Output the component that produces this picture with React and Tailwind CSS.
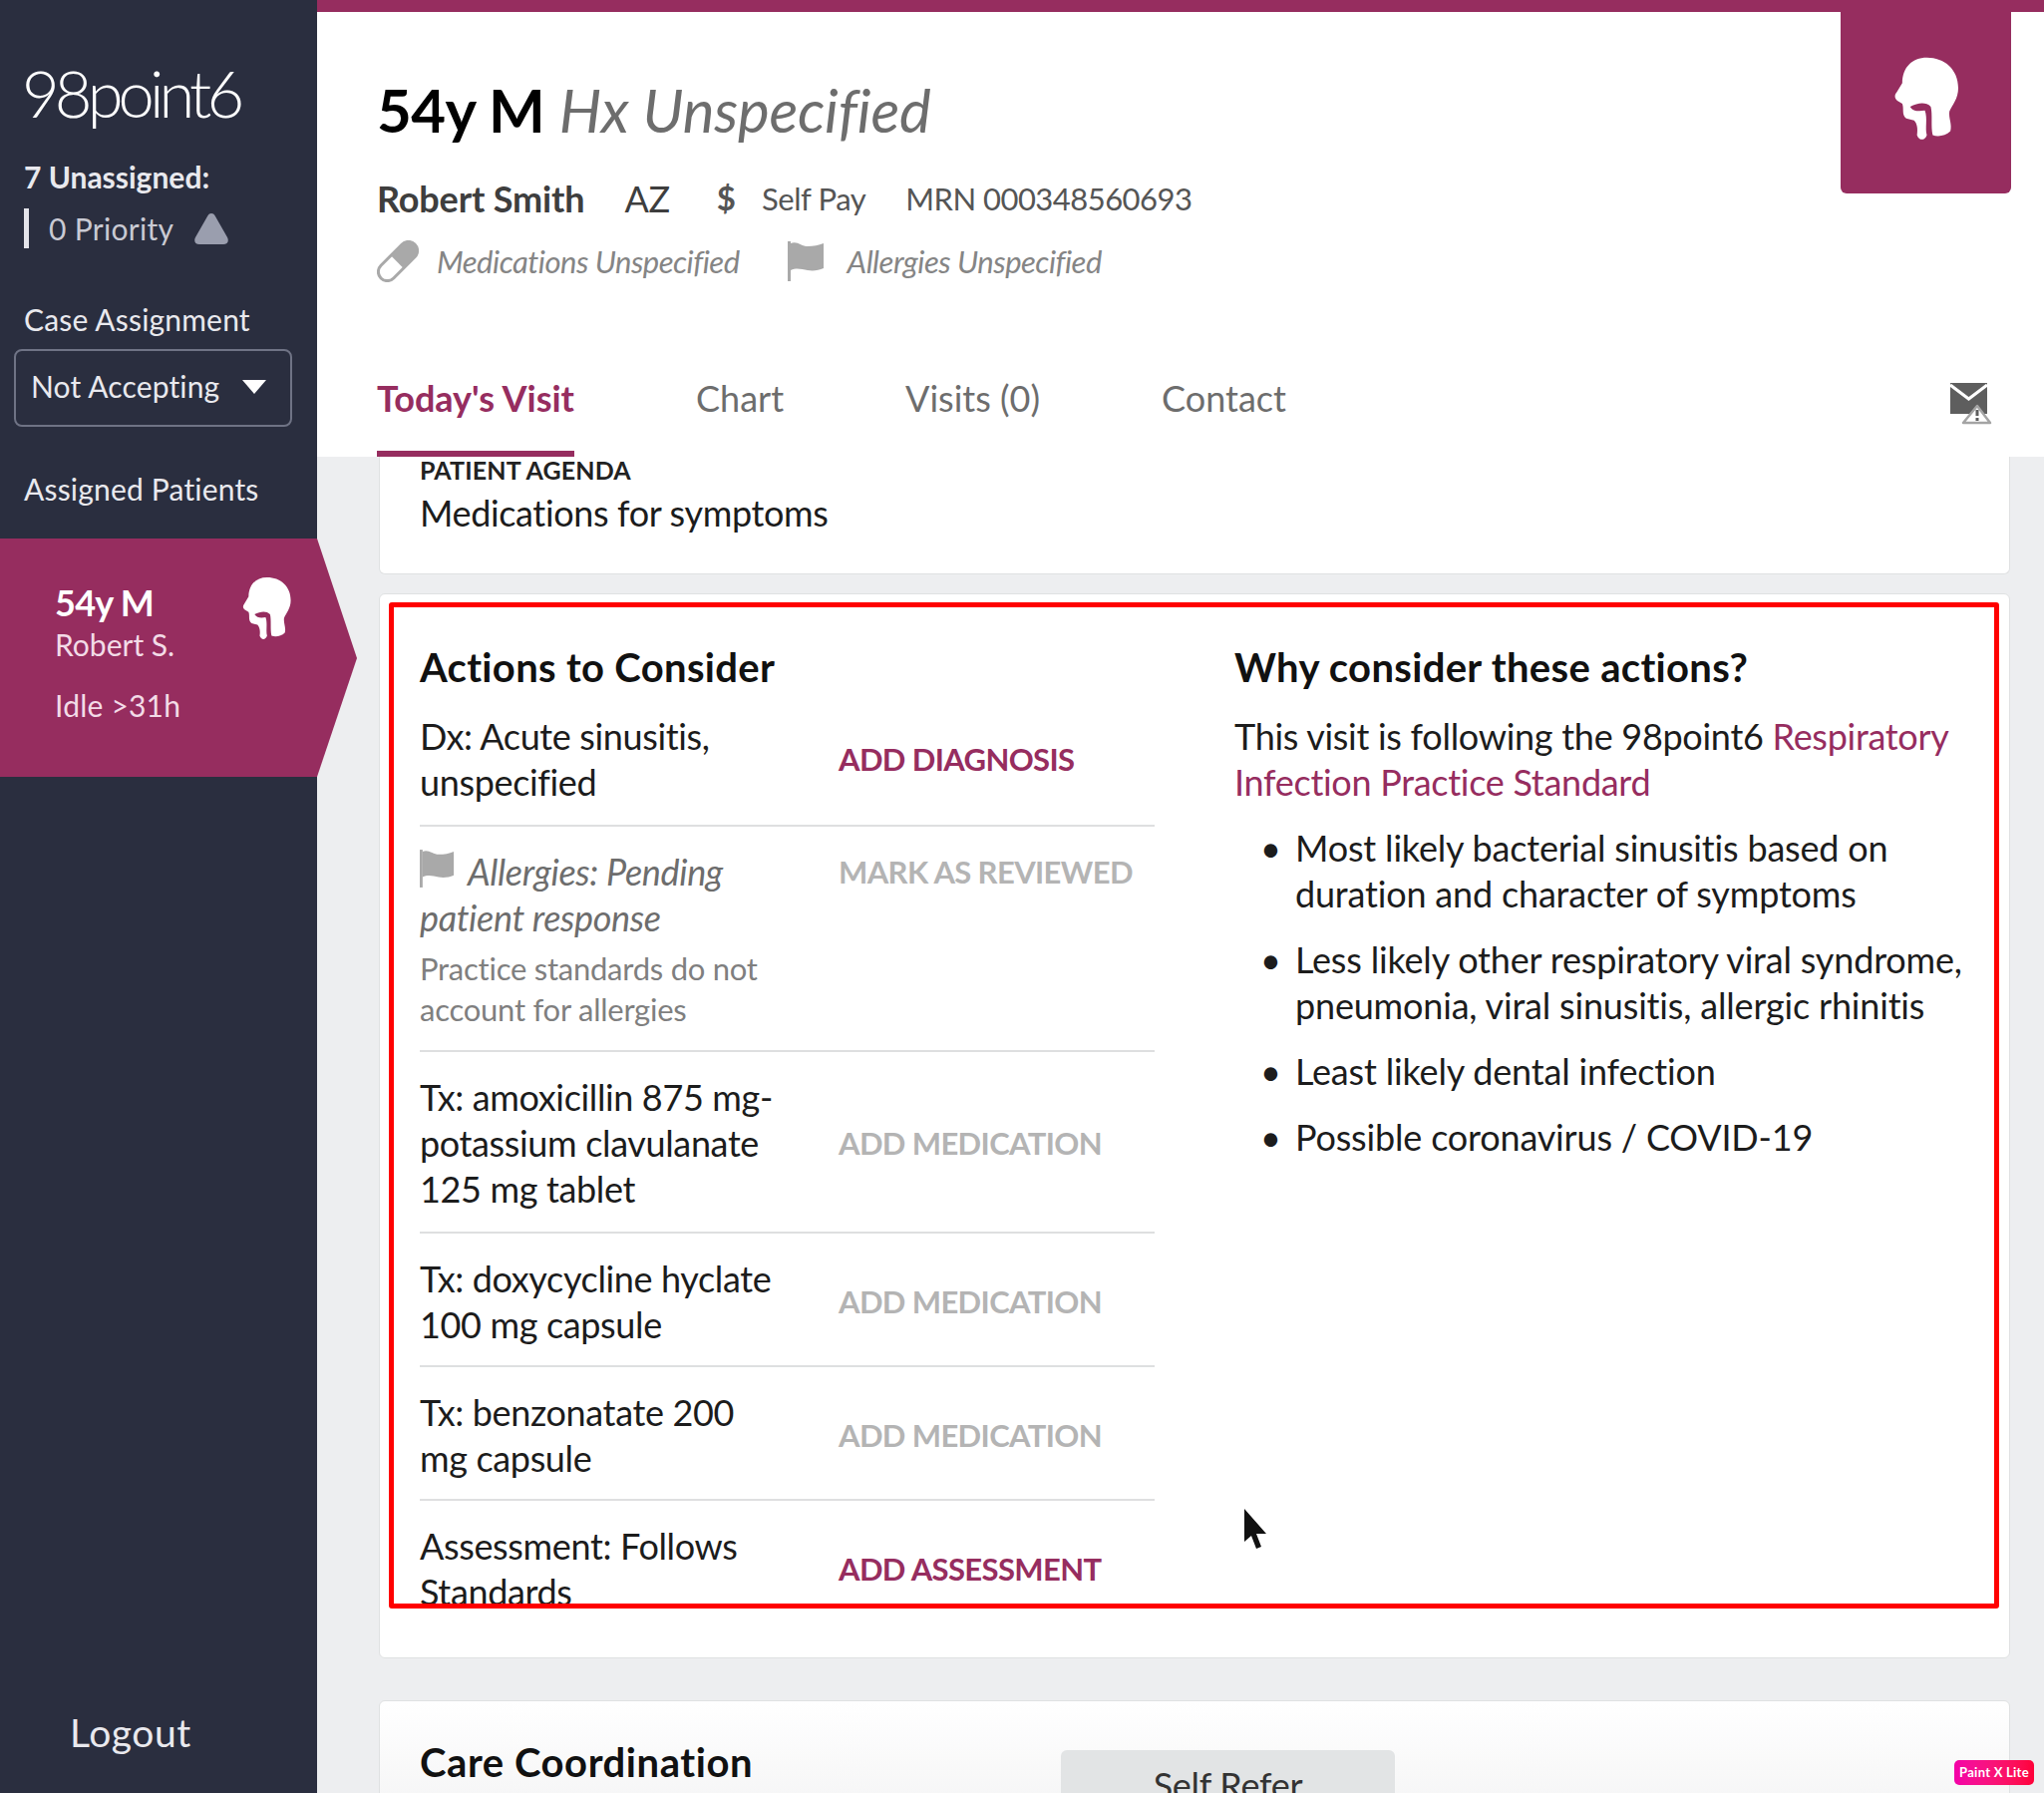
const HEAD_PATH = 'M33 0C51 0 65 12 65 31C65 42 59 48 56 55C55 62 59 68 57 75C52 80 44 81 39 79C37 70 39 58 37 50C32 45 24 46 16 50C19 55 25 55 31 54C34 62 31 72 33 79C31 85 25 85 23 79C24 72 23 67 20 64L12 62C7 58 10 52 8 47L3 44C0 42 0 38 2 36L8 26C8 10 18 0 33 0Z'

function HeadIcon({ className }) {
  return (
    <svg viewBox="0 0 65 85" className={className} fill="#fff">
      <path d={HEAD_PATH} />
    </svg>
  )
}

function FlagIcon({ className }) {
  return (
    <svg viewBox="0 0 38 40" className={className} fill="#a9a9a9">
      <path d="M0 0h3v40H0z" />
      <path d="M3 2c6-3 11 3 17 3 6 0 11-1 16-3v25c-5 2-10 3-16 2-6-1-11-3-17 0z" />
    </svg>
  )
}

function PillIcon({ className }) {
  return (
    <svg viewBox="0 0 42 42" className={className}>
      <g transform="rotate(-45 21 21)">
        <rect x="-3" y="12" width="48" height="18" rx="9" fill="#fff" stroke="#a9a9a9" strokeWidth="3" />
        <path d="M20 12h16a9 9 0 0 1 0 18H20z" fill="#a9a9a9" />
      </g>
    </svg>
  )
}

function MailAlertIcon({ className }) {
  return (
    <svg viewBox="0 0 42 42" className={className}>
      <path d="M0 0h37v31H0z" fill="#5e5e5e" />
      <path d="M0 2l18.500 14L37 2" fill="none" stroke="#fff" strokeWidth="3" />
      <path d="M27 23L40 40H13z" fill="#fff" stroke="#a4a4a4" strokeWidth="2.500" strokeLinejoin="round" />
      <path d="M25.500 27h3v6h-3zM25.500 35h3v3h-3z" fill="#5e5e5e" />
    </svg>
  )
}

function ActionRow({ action, active, top, tight, last, children }) {
  return (
    <div className={`flex items-center pt-[22px] ${tight ? 'pb-[18px]' : 'pb-5'} ${last ? '' : 'border-b-2 border-[#dedfe0]'}`}>
      <div className="w-[420px] shrink-0 text-[36px] leading-[46px] tracking-[-0.01em] text-[#1c1c1c]">{children}</div>
      <span
        className={`text-[31px] leading-[46px] font-bold tracking-[-0.02em] uppercase ${active ? 'text-[#962d5f]' : 'text-[#b4b4b4]'} ${top ? 'self-start' : ''}`}
      >
        {action}
      </span>
    </div>
  )
}

function Bullet({ children }) {
  return (
    <li className="flex">
      <span className="w-[61px] shrink-0 pl-[26px] text-[36px] leading-[46px]">•</span>
      <span>{children}</span>
    </li>
  )
}

function Sidebar() {
  return (
    <aside className="w-[318px] shrink-0 h-full flex flex-col bg-[#2a2e3f] text-[#e9e9ee] font-['Lato',sans-serif]">
      <div className="pl-[22px] pt-[52px] text-[65px] leading-[82px] font-light tracking-[-0.075em] text-white">98point6</div>
      <div className="pl-6 pt-[23px] text-[30px] leading-[40px] font-bold">7 Unassigned:</div>
      <div className="ml-6 mt-[12px] h-10 pl-5 flex items-center border-l-[5px] border-[#e4e4ea] text-[30px] tracking-[0.01em] text-[#c9cad3]">
        0 Priority
        <svg viewBox="0 0 34 31" className="ml-[21px] w-[34px] h-[31px]" fill="#9a9eae">
          <path d="M17 0C19 0 20 1 21 3L33 24C35 28 33 31 29 31H5C1 31 -1 28 1 24L13 3C14 1 15 0 17 0Z" />
        </svg>
      </div>
      <div className="pl-6 pt-[51px] text-[30px] leading-[40px] tracking-[0.006em]">Case Assignment</div>
      <div className="ml-[14px] mt-[10px] w-[279px] h-[78px] pl-[15px] pb-[3px] flex items-center border-2 border-[#6f7385] rounded-lg text-[30px] tracking-[0.005em]">
        Not Accepting
        <svg viewBox="0 0 24 14" className="ml-[23px] w-6 h-[14px]" fill="#fff">
          <path d="M0 0h24L12 14z" />
        </svg>
      </div>
      <div className="pl-6 pt-[42px] text-[30px] leading-[40px] tracking-[0.006em]">Assigned Patients</div>
      <div className="relative z-10 mt-[30px] w-[358px] h-[239px] shrink-0 bg-[#962d5f] [clip-path:polygon(0_0,318px_0,358px_120px,318px_100%,0_100%)] flex justify-between pl-[55px] pr-[66px]">
        <div className="pt-[43px]">
          <div className="text-[36px] leading-[42px] font-bold tracking-[-0.02em] text-white">54y M</div>
          <div className="text-[30px] leading-[42px] text-[#f3dbe7]">Robert S.</div>
          <div className="pt-[19px] text-[30px] leading-[42px] tracking-[0.007em] text-[#f3dbe7]">Idle &gt;31h</div>
        </div>
        <HeadIcon className="mt-[39px] w-[49px] h-[63px]" />
      </div>
      <div className="mt-auto pl-[70px] pb-[36px] text-[39px] leading-[50px] tracking-[0.014em]">Logout</div>
    </aside>
  )
}

function Header() {
  return (
    <header className="h-[446px] shrink-0 bg-white relative pl-[60px] pr-[34px]">
      <h1 className="pt-[66px] text-[60px] leading-[64px] tracking-[-0.01em] text-black">
        <span className="font-bold">54y M</span>{' '}
        <span className="italic tracking-[-0.003em] text-[#6d6d6d]">Hx Unspecified</span>
      </h1>
      <div className="mt-[35px] flex items-center h-[44px] text-[#3e3e3e]">
        <span className="text-[36px] font-bold tracking-[-0.004em]">Robert Smith</span>
        <span className="ml-10 text-[36px] tracking-[-0.01em]">AZ</span>
        <span className="ml-[47px] text-[33px] font-bold text-[#555]">$</span>
        <span className="ml-[26px] text-[31px] tracking-[-0.014em] text-[#555]">Self Pay</span>
        <span className="ml-10 text-[31px] tracking-[-0.017em] text-[#555]">MRN 000348560693</span>
      </div>
      <div className="mt-[19px] flex items-center h-[44px] text-[31px] italic tracking-[-0.016em] text-[#858585]">
        <PillIcon className="w-[42px] h-[42px]" />
        <span className="ml-[18px]">Medications Unspecified</span>
        <FlagIcon className="ml-[48px] w-[38px] h-10" />
        <span className="ml-[22px]">Allergies Unspecified</span>
      </div>
      <nav className="mt-[91px] flex h-[83px] items-start text-[36px] leading-[48px] text-[#6d6d6d]">
        <span className="h-[83px] border-b-[6px] border-[#962d5f] font-bold text-[#962d5f]">Today's Visit</span>
        <span className="ml-[122px]">Chart</span>
        <span className="ml-[122px]">Visits (0)</span>
        <span className="ml-[122px]">Contact</span>
        <MailAlertIcon className="ml-auto mt-[9px] mr-[18px] w-[42px] h-[42px]" />
      </nav>
      <div className="absolute top-0 right-[33px] w-[171px] h-[182px] bg-[#962d5f] rounded-b-md flex justify-center pt-[44px]">
        <HeadIcon className="w-[64px] h-[87px]" />
      </div>
    </header>
  )
}

function ActionsPanel() {
  return (
    <div className="h-[1009px] border-[5px] border-[#ff0000] rounded-[3px] overflow-hidden flex pl-[26px] pt-[37px] relative">
      <div className="w-[737px] shrink-0">
        <h2 className="mb-px text-[40px] leading-[46px] font-bold tracking-[0.008em] text-[#111]">Actions to Consider</h2>
        <ActionRow action="Add Diagnosis" active>
          Dx: Acute sinusitis,<br />unspecified
        </ActionRow>
        <ActionRow action="Mark as Reviewed" top>
          <span className="italic text-[#6d6d6d]">
            <FlagIcon className="inline-block mr-[12px] w-[36px] h-[38px] align-[-2px]" />
            Allergies: Pending<br />patient response
          </span>
          <div className="mt-[8px] text-[31px] leading-[41px] tracking-[-0.008em] text-[#7f7f7f]">Practice standards do not<br />account for allergies</div>
        </ActionRow>
        <ActionRow action="Add Medication">
          Tx: amoxicillin 875 mg-<br />potassium clavulanate<br />125 mg tablet
        </ActionRow>
        <ActionRow action="Add Medication" tight>
          Tx: doxycycline hyclate<br />100 mg capsule
        </ActionRow>
        <ActionRow action="Add Medication" tight>
          Tx: benzonatate 200<br />mg capsule
        </ActionRow>
        <ActionRow action="Add Assessment" active last>
          Assessment: Follows<br />Standards
        </ActionRow>
      </div>
      <div className="ml-20 flex-1 text-[36px] leading-[46px] tracking-[-0.008em] text-[#1c1c1c]">
        <h2 className="mb-[23px] text-[40px] leading-[46px] font-bold tracking-[0.008em] text-[#111]">Why consider these actions?</h2>
        <p>
          This visit is following the 98point6 <span className="text-[#962d5f]">Respiratory<br />Infection Practice Standard</span>
        </p>
        <ul className="mt-[20px] flex flex-col gap-5 tracking-[-0.005em]">
          <Bullet>Most likely bacterial sinusitis based on<br />duration and character of symptoms</Bullet>
          <Bullet>Less likely other respiratory viral syndrome,<br />pneumonia, viral sinusitis, allergic rhinitis</Bullet>
          <Bullet>Least likely dental infection</Bullet>
          <Bullet>Possible coronavirus / COVID-19</Bullet>
        </ul>
      </div>
      <svg viewBox="0 0 24 40" className="absolute left-[852px] top-[904px] w-6 h-10" fill="#111">
        <path d="M1 0L23 25L13 25L18 38L13 40L8 27L1 33Z" />
      </svg>
    </div>
  )
}

export default function App() {
  return (
    <div className="relative w-[2050px] h-[1798px] overflow-hidden flex bg-[#edeef0] font-['Lato',sans-serif]">
      <Sidebar />
      <main className="flex-1 min-w-0 h-full flex flex-col">
        <div className="h-3 shrink-0 bg-[#962d5f]" />
        <Header />
        <div className="pl-[62px] pr-[34px] flex flex-col">
          <section className="h-[118px] bg-white border border-t-0 border-[#dfe1e2] rounded-b-md pl-[40px]">
            <div className="text-[25px] leading-[26px] font-bold tracking-[0.006em] text-[#222]">PATIENT AGENDA</div>
            <div className="mt-[7px] text-[36px] leading-[46px] tracking-[-0.01em] text-[#1c1c1c]">Medications for symptoms</div>
          </section>
          <section className="mt-[19px] h-[1068px] bg-white border border-[#dfe1e2] rounded-md pl-[9px] pr-[10px] pt-2">
            <ActionsPanel />
          </section>
          <section className="mt-[42px] h-[200px] bg-gradient-to-b from-white to-[#ededee] border border-[#dfe1e2] rounded-md pl-[40px] pt-[38px] flex items-start">
            <h2 className="w-[643px] text-[40px] leading-[46px] font-bold tracking-[0.014em] text-[#111]">Care Coordination</h2>
            <button className="mt-[11px] w-[335px] h-[70px] bg-[#e2e4e5] rounded-md text-[36px] tracking-[-0.008em] text-[#333]">Self Refer</button>
          </section>
        </div>
      </main>
      <div className="absolute left-[1960px] top-[1765px] w-20 h-[25px] rounded-[5px] bg-gradient-to-r from-[#f400a8] to-[#ff0038] flex items-center justify-center text-[13px] font-bold tracking-[0.02em] text-white whitespace-nowrap">
        Paint X Lite
      </div>
    </div>
  )
}
